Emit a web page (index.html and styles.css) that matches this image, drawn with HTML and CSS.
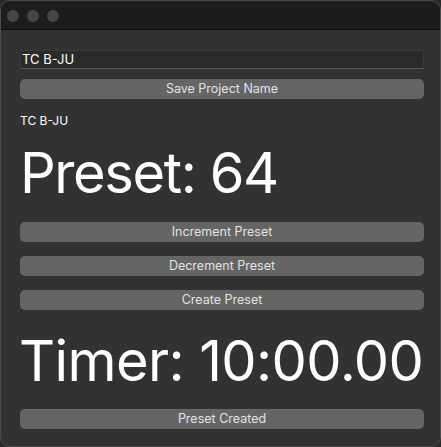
FILE: index.html
```html
<!DOCTYPE html>
<html>
<head>
<meta charset="utf-8">
<link rel="stylesheet" href="styles.css">
</head>
<body>
<div class="window">
  <div class="titlebar">
    <span class="light"></span>
    <span class="light"></span>
    <span class="light"></span>
  </div>
  <div class="content">
    <div class="field">TC B-JU</div>
    <div class="btn btn-save">Save Project Name</div>
    <div class="label">TC B-JU</div>
    <div class="big big-preset">Preset: 64</div>
    <div class="btn btn-first">Increment Preset</div>
    <div class="btn btn-next">Decrement Preset</div>
    <div class="btn btn-next">Create Preset</div>
    <div class="big big-timer">Timer: 10:00.00</div>
    <div class="btn btn-last">Preset Created</div>
  </div>
</div>
</body>
</html>
```
FILE: styles.css
```css
html, body {
  margin: 0;
  padding: 0;
  background: #2a2a2a;
}
body {
  width: 441px;
  height: 447px;
  overflow: hidden;
  font-family: Inter, "Liberation Sans", sans-serif;
}
.window {
  width: 441px;
  height: 447px;
  box-sizing: border-box;
  border-radius: 10px;
  overflow: hidden;
  background: #323232;
  border: 1px solid #4c4c4c;
  display: flex;
  flex-direction: column;
}
.titlebar {
  height: 28px;
  background: #1d1d1d;
  border-bottom: 1px solid #0c0c0c;
  display: flex;
  align-items: center;
  gap: 8px;
  padding-left: 6px;
  flex-shrink: 0;
}
.light {
  width: 12px;
  height: 12px;
  border-radius: 50%;
  background: #454545;
  margin-top: 2px;
}
.content {
  padding: 20px 16px 0 19px;
  display: flex;
  flex-direction: column;
}
.field {
  height: 19px;
  box-sizing: border-box;
  background: #2a2a2a;
  border: 1px solid #3a3a3a;
  border-bottom-color: #585858;
  color: #ffffff;
  font-size: 13px;
  line-height: 17px;
  padding-left: 1px;
}
.btn {
  height: 20px;
  border-radius: 5px;
  background: #656565;
  color: #e2e2e2;
  font-size: 12.5px;
  line-height: 20px;
  text-align: center;
}
.btn-save { margin-top: 10px; }
.label {
  margin-top: 14px;
  height: 15px;
  line-height: 15px;
  font-size: 12px;
  color: #ffffff;
  padding-left: 0;
}
.big {
  color: #ffffff;
  font-size: 56px;
  line-height: 56px;
  height: 56px;
  white-space: nowrap;
}
.big-preset {
  margin-top: 17px;
  letter-spacing: -1.4px;
}
.btn-first { margin-top: 21px; }
.btn-next { margin-top: 14px; }
.big-timer {
  margin-top: 23px;
  margin-left: -1px;
  letter-spacing: -0.6px;
}
.btn-last { margin-top: 20px; }
```
